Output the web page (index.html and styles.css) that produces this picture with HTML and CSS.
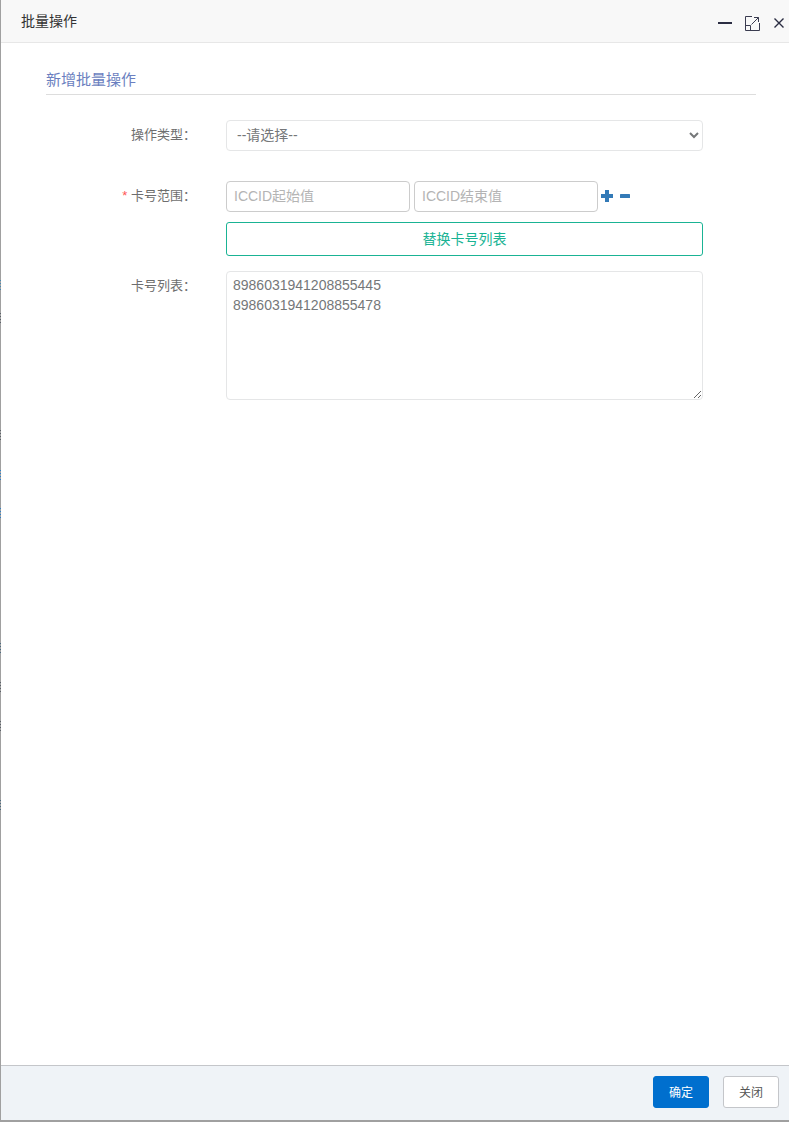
FILE: index.html
```html
<!DOCTYPE html>
<html lang="zh-CN">
<head>
<meta charset="utf-8">
<title>批量操作</title>
<link rel="stylesheet" href="styles.css">
</head>
<body>
<div class="dialog">
  <header class="dialog-head">
    <span class="dialog-title">批量操作</span>
    <div class="win-tools">
      <svg class="ico-min" width="14" height="14" viewBox="0 0 14 14"><rect x="0" y="6" width="14" height="2" fill="#2b2d42"/></svg>
      <svg class="ico-max" width="15" height="15" viewBox="0 0 15 15" fill="none" stroke="#3a3c50" stroke-width="1"><path d="M7 .5H.5V14.5H14.5V7"/><path d="M.5 9.5H5.5V14.5"/><path d="M6.5 8.5L13.5 1.5M9 1.5H13.5V6"/></svg>
      <svg class="ico-close" width="10" height="10" viewBox="0 0 10 10" fill="none" stroke="#2b2d42" stroke-width="1.4"><path d="M.5 .5L9.5 9.5M9.5 .5L.5 9.5"/></svg>
    </div>
  </header>
  <main class="dialog-body">
    <h2 class="section-title">新增批量操作</h2>
    <div class="form-row row-type">
      <label class="form-label">操作类型：</label>
      <select class="field select-field"><option>--请选择--</option></select>
    </div>
    <div class="form-row row-range">
      <label class="form-label"><span class="req">*</span> 卡号范围：</label>
      <div class="range-cell">
        <div class="range-inputs">
          <input class="range-input" type="text" placeholder="ICCID起始值">
          <input class="range-input" type="text" placeholder="ICCID结束值">
          <svg class="ico-plus" width="12" height="12" viewBox="0 0 12 12"><path fill="#337ab7" d="M4 0H8V4H12V8H8V12H4V8H0V4H4Z"/></svg>
          <svg class="ico-minus" width="10" height="4" viewBox="0 0 10 4"><rect width="10" height="4" rx=".5" fill="#337ab7"/></svg>
        </div>
        <button class="replace-btn" type="button">替换卡号列表</button>
      </div>
    </div>
    <div class="form-row row-list">
      <label class="form-label">卡号列表：</label>
      <textarea class="field list-field">8986031941208855445
8986031941208855478</textarea>
    </div>
  </main>
  <footer class="dialog-foot">
    <button class="foot-btn btn-primary" type="button">确定</button>
    <button class="foot-btn btn-plain" type="button">关闭</button>
  </footer>
</div>
</body>
</html>
```
FILE: styles.css
```css
* { box-sizing: border-box; }
html, body { height: 100%; }
body {
  margin: 0;
  height: 1122px;
  overflow: hidden;
  padding: 0 0 2px 1px;
  background-color: #a0a0a0;
  background-repeat: no-repeat;
  background-size: 1px 11px;
  background-image:
    repeating-linear-gradient(#5a6068 0 1px, transparent 1px 3px),
    repeating-linear-gradient(#5a6068 0 1px, transparent 1px 3px),
    repeating-linear-gradient(#2f80c8 0 1px, transparent 1px 3px),
    repeating-linear-gradient(#2f80c8 0 1px, transparent 1px 3px),
    repeating-linear-gradient(#4a6a80 0 1px, transparent 1px 3px),
    repeating-linear-gradient(#5a6068 0 1px, transparent 1px 3px),
    repeating-linear-gradient(#5a6068 0 1px, transparent 1px 3px),
    repeating-linear-gradient(#4a6a80 0 1px, transparent 1px 3px),
    repeating-linear-gradient(#4a88b0 0 1px, transparent 1px 3px);
  background-position: 0 313px, 0 430px, 0 470px, 0 508px, 0 643px, 0 682px, 0 721px, 0 800px, 0 280px;
  font-family: "Liberation Sans", "Noto Sans CJK SC", sans-serif;
  color: #666;
}
.dialog {
  height: 1120px;
  display: flex;
  flex-direction: column;
  background: #fff;
}
.dialog-head {
  height: 43px;
  flex: none;
  display: flex;
  align-items: center;
  justify-content: space-between;
  padding: 0 5px 0 20px;
  background: #f8f8f8;
  border-bottom: 1px solid #e7e7e7;
}
.dialog-title { font-size: 14px; color: #333; padding-bottom: 2px; }
.win-tools { display: flex; align-items: center; padding-top: 4px; }
.ico-min { margin-right: 13px; }
.ico-max { margin-right: 14px; }
.dialog-body {
  flex: 1;
  padding: 27px 33px 0 45px;
}
.section-title {
  margin: 0 0 25px;
  height: 25px;
  line-height: 19px;
  font-size: 15px;
  font-weight: 400;
  color: #6b7fc0;
  border-bottom: 1px solid #ddd;
}
.form-row {
  display: grid;
  grid-template-columns: 150px 477px;
  column-gap: 30px;
  align-items: start;
}
.form-label {
  font-size: 13px;
  line-height: 29px;
  text-align: right;
  color: #6e6e6e;
}
.req { color: #f55; }
.field {
  display: block;
  width: 100%;
  border: 1px solid #e5e6e7;
  border-radius: 4px;
  background: #fff;
  font-family: inherit;
  font-size: 14px;
  color: #757779;
}
.select-field { height: 31px; padding: 0 6px 2px; outline: 0; }
.row-type { margin-bottom: 30px; }
.row-range { margin-bottom: 15px; }
.range-inputs { display: flex; align-items: center; height: 31px; }
.range-input {
  width: 184px;
  height: 31px;
  margin-right: 4px;
  padding: 0 7px 2px;
  border: 1px solid #ccc;
  border-radius: 4px;
  font-family: inherit;
  font-size: 14px;
  outline: 0;
}
.range-input::placeholder { color: #b4b4b4; opacity: 1; }
.range-input:nth-child(2) { margin-right: 3px; }
.ico-plus { margin-bottom: 1px; }
.ico-minus { margin: 0 0 1px 7px; }
.replace-btn {
  display: block;
  width: 100%;
  height: 34px;
  margin-top: 10px;
  padding: 0 0 2px;
  border: 1px solid #1ab394;
  border-radius: 3px;
  background: #fff;
  color: #1ab394;
  font-family: inherit;
  font-size: 14px;
}
.list-field {
  height: 129px;
  padding: 3px 6px;
  line-height: 20px;
  resize: both;
  outline: 0;
}
.dialog-foot {
  height: 55px;
  flex: none;
  display: flex;
  justify-content: flex-end;
  align-items: flex-start;
  gap: 14px;
  padding: 10px 10px 0 0;
  background: #eff3f7;
  border-top: 1px solid #c4c6ca;
}
.foot-btn {
  width: 56px;
  height: 32px;
  padding: 0 0 2px;
  border-radius: 3px;
  font-family: inherit;
  font-size: 12px;
}
.btn-primary { background: #006fce; border: 1px solid #006fce; color: #fff; font-weight: 400; }
.btn-plain { background: #fff; border: 1px solid #c4c6ca; color: #555; }
```
